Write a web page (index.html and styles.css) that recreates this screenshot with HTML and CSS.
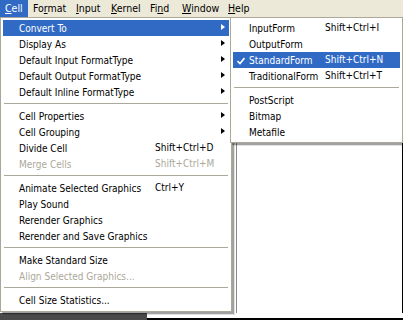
FILE: index.html
```html
<!DOCTYPE html>
<html>
<head>
<meta charset="utf-8">
<link rel="stylesheet" href="styles.css">
</head>
<body>
<div class="menubar">
  <div class="mb-item mb-cell active"><u>C</u>ell</div>
  <div class="mb-item mb-format">Fo<u>r</u>mat</div>
  <div class="mb-item mb-input"><u>I</u>nput</div>
  <div class="mb-item mb-kernel"><u>K</u>ernel</div>
  <div class="mb-item mb-find">Fi<u>n</u>d</div>
  <div class="mb-item mb-window"><u>W</u>indow</div>
  <div class="mb-item mb-help"><u>H</u>elp</div>
</div>
<div class="workspace">
  <div class="work-main">
    <div class="work-left"></div>
    <div class="work-pane"></div>
  </div>
  <div class="work-bottom">
    <div class="bottom-dark"></div>
    <div class="bottom-light"></div>
  </div>
</div>

<div class="menu main-menu">
  <div class="item hl"><span class="label">Convert To</span><span class="arrow"></span></div>
  <div class="item"><span class="label">Display As</span><span class="arrow"></span></div>
  <div class="item"><span class="label">Default Input FormatType</span><span class="arrow"></span></div>
  <div class="item"><span class="label">Default Output FormatType</span><span class="arrow"></span></div>
  <div class="item"><span class="label">Default Inline FormatType</span><span class="arrow"></span></div>
  <div class="sep"></div>
  <div class="item"><span class="label">Cell Properties</span><span class="arrow"></span></div>
  <div class="item"><span class="label">Cell Grouping</span><span class="arrow"></span></div>
  <div class="item"><span class="label">Divide Cell</span><span class="key">Shift+Ctrl+D</span></div>
  <div class="item dis"><span class="label">Merge Cells</span><span class="key">Shift+Ctrl+M</span></div>
  <div class="sep"></div>
  <div class="item"><span class="label">Animate Selected Graphics</span><span class="key">Ctrl+Y</span></div>
  <div class="item"><span class="label">Play Sound</span></div>
  <div class="item"><span class="label">Rerender Graphics</span></div>
  <div class="item"><span class="label">Rerender and Save Graphics</span></div>
  <div class="sep"></div>
  <div class="item"><span class="label">Make Standard Size</span></div>
  <div class="item dis"><span class="label">Align Selected Graphics...</span></div>
  <div class="sep"></div>
  <div class="item"><span class="label">Cell Size Statistics...</span></div>
</div>

<div class="menu sub-menu">
  <div class="item"><span class="label">InputForm</span><span class="key">Shift+Ctrl+I</span></div>
  <div class="item"><span class="label">OutputForm</span></div>
  <div class="item hl"><svg class="check" width="8" height="8" viewBox="0 0 8 8"><path d="M0.5 4 L3 6.5 L7.5 1" fill="none" stroke="#fff" stroke-width="1.6"/></svg><span class="label">StandardForm</span><span class="key">Shift+Ctrl+N</span></div>
  <div class="item"><span class="label">TraditionalForm</span><span class="key">Shift+Ctrl+T</span></div>
  <div class="sep"></div>
  <div class="item"><span class="label">PostScript</span></div>
  <div class="item"><span class="label">Bitmap</span></div>
  <div class="item"><span class="label">Metafile</span></div>
</div>
</body>
</html>
```

FILE: styles.css
```css
html, body {
  margin: 0;
  padding: 0;
}
body {
  width: 403px;
  height: 320px;
  overflow: hidden;
  position: relative;
  background: #ffffff;
  font-family: "DejaVu Sans Condensed", "DejaVu Sans", sans-serif;
  font-size: 10px;
  color: #000;
}
.menubar {
  display: flex;
  height: 17px;
  background: #ece9d8;
}
.mb-item {
  box-sizing: border-box;
  height: 17px;
  line-height: 17px;
  padding-left: 5px;
  font-size: 10.5px;
  white-space: nowrap;
}
.mb-item u { text-decoration: underline; text-underline-offset: 1px; }
.mb-item.active { background: #316ac5; color: #fff; }
.mb-cell { width: 28px; }
.mb-format { width: 43px; }
.mb-input { width: 35px; }
.mb-kernel { width: 39px; }
.mb-find { width: 32px; }
.mb-window { width: 46px; }
.mb-help { width: 30px; }

.workspace {
  display: flex;
  flex-direction: column;
  height: 303px;
}
.work-main {
  flex: 1;
  display: flex;
}
.work-left {
  width: 236px;
  background: #fff;
}
.work-pane {
  flex: 1;
  background: #fff;
  border-left: 1px solid #8a8a8a;
  border-right: 1px solid #000;
}
.work-bottom {
  height: 7px;
  display: flex;
}
.bottom-dark {
  width: 147px;
  background: #4a4a4a;
}
.bottom-light {
  flex: 1;
  background: #fff;
  border-bottom: 2px solid #000;
}

.menu {
  position: absolute;
  top: 17px;
  box-sizing: border-box;
  background: #fff;
  border: 1px solid #aca899;
  padding: 2px 2px 3px 2px;
  box-shadow: 2px 2px 0 rgba(0,0,0,0.28), 3px 3px 0 rgba(0,0,0,0.12);
}
.main-menu {
  left: 0;
  width: 232px;
}
.sub-menu {
  left: 230px;
  width: 173px;
  padding-bottom: 2px;
}
.item {
  position: relative;
  display: flex;
  align-items: center;
  height: 16px;
  padding-left: 16px;
  white-space: nowrap;
}
.item .label { flex: none; }
.main-menu .item .key {
  position: absolute;
  left: 152px;
  top: 0;
  line-height: 16px;
}
.sub-menu .item .key {
  position: absolute;
  left: 92px;
  top: 0;
  line-height: 16px;
}
.item.hl { background: #316ac5; color: #fff; }
.item.dis { color: #aca899; }
.arrow {
  position: absolute;
  right: 4px;
  top: 4px;
  width: 0;
  height: 0;
  border-top: 3.5px solid transparent;
  border-bottom: 3.5px solid transparent;
  border-left: 4px solid #000;
}
.item.hl .arrow { border-left-color: #fff; }
.check {
  position: absolute;
  left: 4px;
  top: 5px;
}
.sep {
  height: 1px;
  background: #aca899;
  margin: 3px 1px 4px 1px;
}
```
